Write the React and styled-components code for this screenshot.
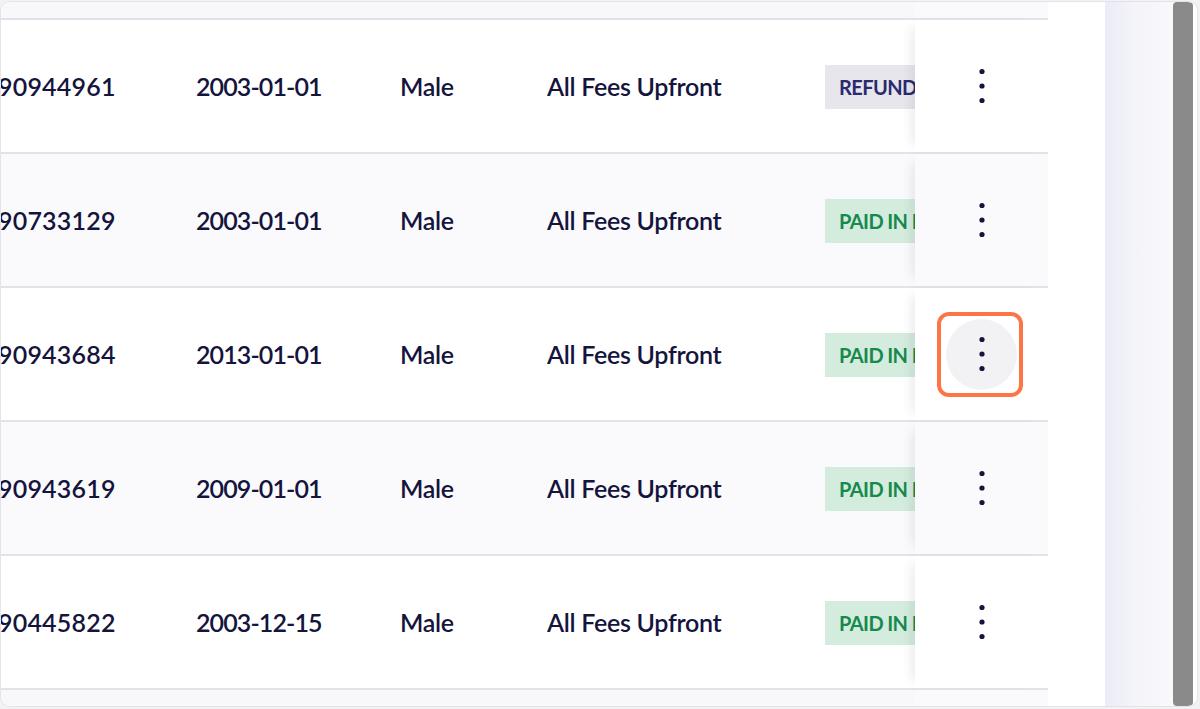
import React from 'react'
import styled, { createGlobalStyle, css } from 'styled-components'

const GlobalStyle = createGlobalStyle`
  html, body {
    margin: 0;
    padding: 0;
    background: #f2f2f5;
  }
  body {
    font-family: Lato, "Noto Sans", sans-serif;
    color: #14143c;
  }
`

const rows = [
  { id: '90944961', dob: '2003-01-01', gender: 'Male', plan: 'All Fees Upfront', status: 'refunded' },
  { id: '90733129', dob: '2003-01-01', gender: 'Male', plan: 'All Fees Upfront', status: 'paid' },
  { id: '90943684', dob: '2013-01-01', gender: 'Male', plan: 'All Fees Upfront', status: 'paid', focused: true },
  { id: '90943619', dob: '2009-01-01', gender: 'Male', plan: 'All Fees Upfront', status: 'paid' },
  { id: '90445822', dob: '2003-12-15', gender: 'Male', plan: 'All Fees Upfront', status: 'paid' },
]

const statusLabel = {
  refunded: 'REFUNDED',
  paid: 'PAID IN FULL',
}

function MoreIcon() {
  return (
    <svg width="6" height="36" viewBox="0 0 6 36">
      <circle cx="3" cy="3.5" r="2.6" fill="#14143c" />
      <circle cx="3" cy="18" r="2.6" fill="#14143c" />
      <circle cx="3" cy="32.5" r="2.6" fill="#14143c" />
    </svg>
  )
}

function App() {
  return (
    <>
      <GlobalStyle />
      <Page>
        <Frame>
          <TableArea>
            <Table>
              <HeaderStrip>
                <StickyCell $striped />
              </HeaderStrip>
              {rows.map((row, i) => (
                <Row key={row.id} $striped={i % 2 === 1}>
                  <IdCell>{row.id}</IdCell>
                  <DateCell>{row.dob}</DateCell>
                  <Cell>{row.gender}</Cell>
                  <Cell>{row.plan}</Cell>
                  <BadgeCell>
                    <Badge $status={row.status}>{statusLabel[row.status]}</Badge>
                  </BadgeCell>
                  <StickyCell $striped={i % 2 === 1}>
                    <MenuButton $focused={row.focused}>
                      <MoreIcon />
                    </MenuButton>
                  </StickyCell>
                </Row>
              ))}
              <TailRow>
                <StickyCell $striped />
              </TailRow>
            </Table>
            <Spacer />
          </TableArea>
          <Gutter />
          <ScrollTrack>
            <ScrollThumb />
          </ScrollTrack>
        </Frame>
      </Page>
    </>
  )
}

export default App

const Page = styled.div`
  height: 709px;
  padding: 1px 2px 2px 0;
  box-sizing: border-box;
`

const Frame = styled.div`
  height: 100%;
  display: flex;
  border: 1.5px solid #e3e3e9;
  border-radius: 10px;
  background: #ffffff;
  overflow: hidden;
  box-sizing: border-box;
`

const TableArea = styled.div`
  display: flex;
  flex: 0 0 1104px;
  overflow: hidden;
`

const Table = styled.div`
  flex: 0 0 1047px;
  display: flex;
  flex-direction: column;
  overflow: hidden;
`

const Spacer = styled.div`
  flex: 1;
  background: #ffffff;
`

const rowGrid = css`
  display: grid;
  grid-template-columns: 195px 204px 147px 278px 90px 133px;
  border-bottom: 2px solid #e2e2e8;
`

const HeaderStrip = styled.div`
  ${rowGrid};
  flex: 0 0 16px;
  background: #f8f8fb;
  & > * {
    grid-column: 6;
  }
`

const TailRow = styled.div`
  ${rowGrid};
  flex: 1;
  border-bottom: none;
  background: #f8f8fb;
  & > * {
    grid-column: 6;
  }
`

const Row = styled.div`
  ${rowGrid};
  flex: 0 0 132px;
  background: ${p => (p.$striped ? '#fafafc' : '#ffffff')};
  align-items: center;
  font-size: 25px;
  font-weight: 600;
  color: #14143c;
`

const Cell = styled.div`
  white-space: nowrap;
  overflow: hidden;
  letter-spacing: -0.3px;
`

const IdCell = styled(Cell)`
  margin-left: -3px;
  letter-spacing: 0.2px;
`

const DateCell = styled(Cell)`
  letter-spacing: -0.9px;
`

const BadgeCell = styled.div`
  overflow: hidden;
  align-self: center;
`

const Badge = styled.span`
  display: inline-flex;
  align-items: center;
  height: 44px;
  margin-top: 2px;
  padding: 0 14px;
  font-size: 20px;
  font-weight: 700;
  letter-spacing: -0.6px;
  white-space: nowrap;
  background: ${p => (p.$status === 'refunded' ? '#e6e6ec' : '#d3ecde')};
  color: ${p => (p.$status === 'refunded' ? '#2a2a6e' : '#17894d')};
`

const StickyCell = styled.div`
  align-self: stretch;
  display: flex;
  align-items: center;
  justify-content: center;
  background: ${p => (p.$striped ? '#fafafc' : '#ffffff')};
  box-shadow: -10px 0 12px -8px rgba(20, 20, 40, 0.1);
  position: relative;
`

const MenuButton = styled.div`
  position: relative;
  width: 71px;
  height: 71px;
  border-radius: 50%;
  display: flex;
  align-items: center;
  justify-content: center;
  background: ${p => (p.$focused ? '#f2f2f4' : 'transparent')};

  ${p =>
    p.$focused &&
    css`
      &::after {
        content: '';
        position: absolute;
        left: -9px;
        top: -7px;
        width: 86px;
        height: 85px;
        border: 4px solid #fd7546;
        border-radius: 12px;
        box-sizing: border-box;
      }
    `}
`

const Gutter = styled.div`
  flex: 0 0 68px;
  background: linear-gradient(to right, #eaecf6 0%, #f3f3f9 40%, #f9f9fc 100%);
`

const ScrollTrack = styled.div`
  flex: 0 0 24px;
  display: flex;
  background: #ffffff;
`

const ScrollThumb = styled.div`
  width: 20px;
  background: #8a8a8a;
  border-radius: 4px;
`
